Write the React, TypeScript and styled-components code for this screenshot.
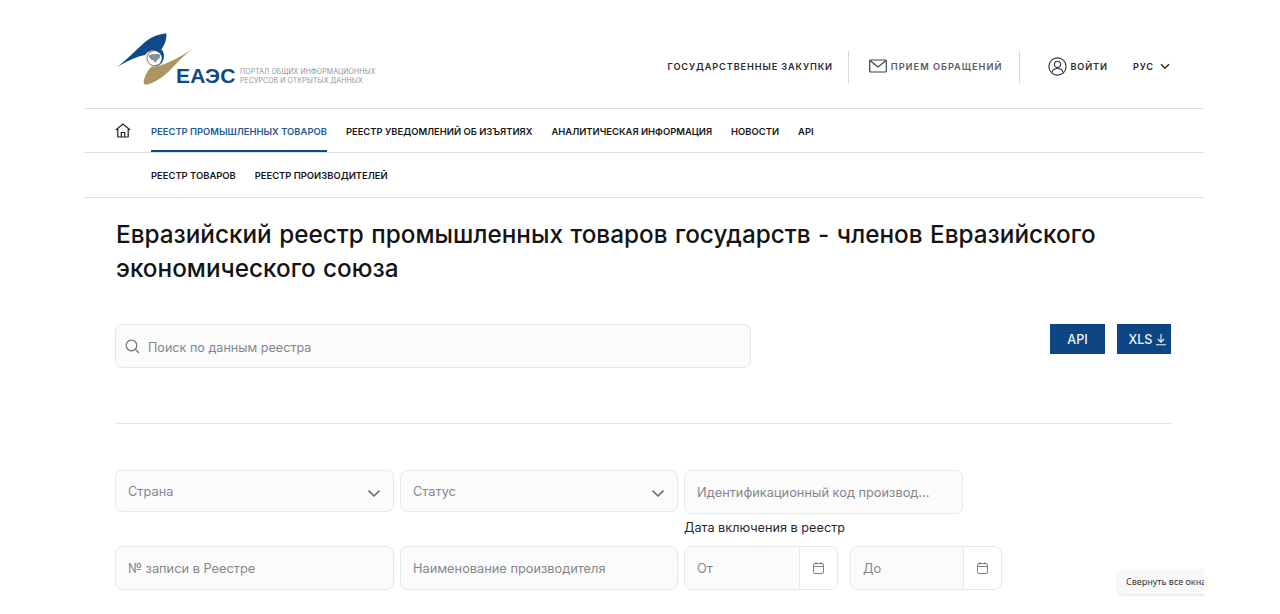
import React from "react";
import styled, { createGlobalStyle } from "styled-components";

const Global = createGlobalStyle`
  html, body { margin: 0; padding: 0; background: #fff; }
  body { font-family: Inter, "Noto Sans", "Liberation Sans", sans-serif; color: #111; overflow: hidden; }
`;

const Page = styled.div`
  position: relative;
  width: 1120px;
  height: 614px;
  margin-left: 84px;
  overflow: hidden;
  background: #fff;
`;

const Header = styled.header`
  height: 108px;
  border-bottom: 1px solid #dedede;
  display: flex;
  align-items: flex-start;
  justify-content: space-between;
  padding: 0 34px 0 31px;
`;

const Logo = styled.div`
  display: flex;
  align-items: flex-end;
  height: 85px;
  width: 270px;
`;

const LogoMark = styled.svg`
  width: 61px;
  height: 54px;
  overflow: visible;
  flex: none;
`;

const LogoName = styled.span`
  font-family: "Liberation Sans", Arial, sans-serif;
  font-weight: 700;
  font-size: 21px;
  line-height: 18px;
  letter-spacing: 0.2px;
  color: #10498a;
  flex: none;
  width: 64px;
`;

const LogoCaption = styled.span`
  font-size: 6.95px;
  line-height: 9px;
  letter-spacing: 0.1px;
  color: #8f959c;
  white-space: nowrap;
`;

const TopLinks = styled.nav`
  display: flex;
  align-items: center;
  height: 32px;
  margin-top: 51px;
`;

const TopLink = styled.span<{ $muted?: boolean }>`
  display: inline-flex;
  align-items: center;
  padding-bottom: 2px;
  font-size: 9.2px;
  font-weight: 600;
  letter-spacing: ${(p) => (p.$muted ? "1px" : "0.87px")};
  white-space: nowrap;
  color: ${(p) => (p.$muted ? "#555b60" : "#2a2a2a")};
`;

const Sep = styled.i<{ $ml: number; $mr: number }>`
  display: block;
  width: 1px;
  height: 32px;
  background: #d8d8d8;
  margin-left: ${(p) => p.$ml}px;
  margin-right: ${(p) => p.$mr}px;
`;

const IconGap = styled.span<{ $gap: number }>`
  display: inline-flex;
  margin-right: ${(p) => p.$gap}px;
`;

const Lang = styled(TopLink)`
  margin-left: 25px;
`;

const MainNav = styled.nav`
  height: 43px;
  border-bottom: 1px solid #dedede;
  display: flex;
  align-items: stretch;
  padding-left: 31px;
`;

const HomeIcon = styled.span`
  display: flex;
  align-items: center;
  width: 36px;
`;

const NavItems = styled.div`
  display: flex;
  gap: 19px;
  height: 100%;
`;

const NavItem = styled.a<{ $active?: boolean }>`
  display: flex;
  align-items: center;
  padding-top: 1px;
  box-sizing: border-box;
  font-size: 9.42px;
  font-weight: 600;
  white-space: nowrap;
  color: ${(p) => (p.$active ? "#1d5a96" : "#161616")};
  box-shadow: ${(p) => (p.$active ? "inset 0 -2px 0 #0f4a84" : "none")};
`;

const SubNav = styled.nav`
  height: 44px;
  border-bottom: 1px solid #dedede;
`;

const SubItems = styled(NavItems)`
  padding-left: 67px;
`;

const Content = styled.main`
  padding: 19px 33px 0 32px;
`;

const Title = styled.h1`
  margin: 0;
  font-size: 24.3px;
  word-spacing: 1px;
  line-height: 34px;
  font-weight: 500;
  color: #141414;
  width: 1010px;
`;

const SearchRow = styled.div`
  display: flex;
  justify-content: space-between;
  align-items: flex-start;
  margin-top: 39px;
  margin-left: -1px;
`;

const SearchBox = styled.div`
  width: 636px;
  height: 44px;
  box-sizing: border-box;
  border: 1px solid #e6e6e6;
  border-radius: 7px;
  background: #fbfbfb;
  display: flex;
  align-items: center;
  padding-left: 9px;
  gap: 8px;
`;

const Placeholder = styled.span`
  font-size: 12.8px;
  color: #83878b;
  white-space: nowrap;
`;

const SearchText = styled(Placeholder)`
  font-size: 12.6px;
  padding-top: 2px;
`;

const Actions = styled.div`
  display: flex;
  gap: 12px;
`;

const ActionButton = styled.button<{ $w: number; $pl?: number }>`
  height: 30px;
  width: ${(p) => p.$w}px;
  border: 0;
  padding: 0 0 0 ${(p) => p.$pl ?? 0}px;
  background: #0d4683;
  color: #eef3f8;
  font: 500 12.5px Inter, sans-serif;
  display: flex;
  align-items: center;
  justify-content: center;
  gap: 3px;
`;

const Divider = styled.hr`
  border: 0;
  border-top: 1px solid #e2e2e2;
  margin: 55px 0 0 -1px;
`;

const Filters = styled.div`
  margin-top: 46px;
  margin-left: -1px;
  display: grid;
  grid-template-columns: 279px 278px 318px;
  column-gap: 6px;
`;

const Field = styled.div<{ $h?: number }>`
  height: ${(p) => p.$h ?? 44}px;
  box-sizing: border-box;
  border: 1px solid #e8e8e8;
  border-radius: 7px;
  background: #fbfbfb;
  display: flex;
  align-items: center;
  justify-content: space-between;
  padding: 0 12px 0 12px;
  overflow: hidden;
`;

const FirstRow = styled.div`
  grid-column: 1 / -1;
  display: grid;
  grid-template-columns: 279px 278px 279px;
  column-gap: 6px;
`;

const Chevron = styled.span`
  display: flex;
  margin-top: 5px;
`;

const DateLabel = styled.div`
  grid-column: 3;
  font-size: 12.7px;
  line-height: 16px;
  color: #2a2a2a;
  margin-top: 6px;
  height: 26px;
  white-space: nowrap;
`;

const DateGroup = styled.div`
  display: flex;
  gap: 12px;
`;

const DateField = styled.div<{ $w: number }>`
  width: ${(p) => p.$w}px;
  height: 44px;
  box-sizing: border-box;
  border: 1px solid #e8e8e8;
  border-radius: 7px;
  display: flex;
  overflow: hidden;
  background: #fff;
`;

const DateInput = styled.div`
  flex: 1;
  background: #fbfbfb;
  border-right: 1px solid #e8e8e8;
  display: flex;
  align-items: center;
  padding-left: 12px;
`;

const DateIcon = styled.div`
  width: 37px;
  display: flex;
  align-items: center;
  justify-content: center;
  flex: none;
`;

const Tooltip = styled.div`
  position: absolute;
  left: 1034px;
  top: 570px;
  width: 110px;
  height: 24px;
  box-sizing: border-box;
  background: #f8f8f8;
  border-radius: 3px;
  box-shadow: 0 1px 3px rgba(0, 0, 0, 0.12);
  font-family: "Noto Sans", sans-serif;
  font-size: 9px;
  line-height: 24px;
  padding-left: 8px;
  white-space: nowrap;
  color: #333;
`;

const Calendar = () => (
  <svg width="13" height="14" viewBox="0 0 13 14" fill="none" stroke="#7d8186" strokeWidth="1">
    <rect x="1.5" y="2.5" width="10" height="10" rx="1.5" />
    <path d="M1.5 5.5h10M4 1v2.5M9 1v2.5" />
  </svg>
);

const Down = () => (
  <svg width="14" height="9" viewBox="0 0 14 9" fill="none" stroke="#5f656b" strokeWidth="1.5">
    <path d="M1.5 1.5 7 7l5.5-5.5" />
  </svg>
);

export default function App() {
  return (
    <Page>
      <Global />
      <Header>
        <Logo>
          <LogoMark viewBox="0 0 61 54">
            <circle cx="40" cy="27" r="8.6" fill="#ab9561" />
            <path d="M77 18.300C68 24 60 29 52 32C46 34.500 42 36 37 35.500C33.500 38 30 44 28.700 50C28.500 53.500 30 54.200 33 53.300C43 50.500 52 43 60 34C65 28.500 71 23 77 18.300Z" fill="#ab9561" />
            <path d="M2 36.300C10 30 22 18 30.300 10.700C37 5.500 44 3 51.300 2.300C52 7 50 14 46.300 18.300C50 22 50 29 45.500 32.500C43.500 34 41 35 39 35C44 32 46 28 44.500 23.500C43 20 39 18.500 35.500 19.800C32.500 21 30.800 22.800 30.300 24C24 24.800 12 30 2 36.300Z" fill="#10498a" />
            <circle cx="39.700" cy="27.200" r="7" fill="#fff" />
            <path d="M33.800 25c1.700-2.200 4-1.800 5.700-1.800 2.300 0 4.500-.8 5.500.8 1 2.400-1.600 4.300-3.200 5.200l-.8 2.400c-1.600 0-1.800-1.600-2.600-2.400-2.400 0-3.600-1.600-4.600-4.200Z" fill="#7f909d" />
          </LogoMark>
          <LogoName>ЕАЭС</LogoName>
          <LogoCaption>
            ПОРТАЛ ОБЩИХ ИНФОРМАЦИОННЫХ
            <br />
            РЕСУРСОВ И ОТКРЫТЫХ ДАННЫХ
          </LogoCaption>
        </Logo>
        <TopLinks>
          <TopLink>ГОСУДАРСТВЕННЫЕ ЗАКУПКИ</TopLink>
          <Sep $ml={15} $mr={20} />
          <TopLink $muted>
            <IconGap $gap={4}>
              <svg width="18" height="14" viewBox="0 0 18 14" fill="none" stroke="#3c4146" strokeWidth="1.2">
                <rect x=".7" y="1" width="16.600" height="12" rx="1" />
                <path d="m1 1.500 8 6.500 8-6.500" />
              </svg>
            </IconGap>
            ПРИЕМ ОБРАЩЕНИЙ
          </TopLink>
          <Sep $ml={17} $mr={28} />
          <TopLink>
            <IconGap $gap={3}>
              <svg width="19" height="19" viewBox="0 0 19 19" fill="none" stroke="#2f3337" strokeWidth="1.1">
                <circle cx="9.500" cy="9.500" r="8.600" />
                <circle cx="9.500" cy="7.300" r="3.100" />
                <path d="M4 15.500c.6-3 2.600-4 5.500-4s4.900 1 5.500 4" />
              </svg>
            </IconGap>
            ВОЙТИ
          </TopLink>
          <Lang>
            <IconGap $gap={6}>РУС</IconGap>
            <svg width="10" height="7" viewBox="0 0 10 7" fill="none" stroke="#2a2a2a" strokeWidth="1.4">
              <path d="M1 1.200 5 5.200l4-4" />
            </svg>
          </Lang>
        </TopLinks>
      </Header>
      <MainNav>
        <HomeIcon>
          <svg width="16" height="15" viewBox="0 0 16 15" fill="none" stroke="#222" strokeWidth="1.2">
            <path d="M.8 7 8 1l7.200 6M2.800 6v8h10.400V6M6.300 14V9.500h3.400V14" />
          </svg>
        </HomeIcon>
        <NavItems>
          <NavItem $active>РЕЕСТР ПРОМЫШЛЕННЫХ ТОВАРОВ</NavItem>
          <NavItem>РЕЕСТР УВЕДОМЛЕНИЙ ОБ ИЗЪЯТИЯХ</NavItem>
          <NavItem>АНАЛИТИЧЕСКАЯ ИНФОРМАЦИЯ</NavItem>
          <NavItem>НОВОСТИ</NavItem>
          <NavItem>API</NavItem>
        </NavItems>
      </MainNav>
      <SubNav>
        <SubItems>
          <NavItem>РЕЕСТР ТОВАРОВ</NavItem>
          <NavItem>РЕЕСТР ПРОИЗВОДИТЕЛЕЙ</NavItem>
        </SubItems>
      </SubNav>
      <Content>
        <Title>Евразийский реестр промышленных товаров государств - членов Евразийского экономического союза</Title>
        <SearchRow>
          <SearchBox>
            <svg width="15" height="15" viewBox="0 0 15 15" fill="none" stroke="#6f7479" strokeWidth="1.2">
              <circle cx="6.500" cy="6.500" r="5.300" />
              <path d="m10.500 10.500 3.500 3.500" />
            </svg>
            <SearchText>Поиск по данным реестра</SearchText>
          </SearchBox>
          <Actions>
            <ActionButton $w={55}>API</ActionButton>
            <ActionButton $w={54} $pl={8}>
              XLS
              <svg width="12" height="13" viewBox="0 0 12 13" fill="none" stroke="#eef3f8" strokeWidth="1.100">
                <path d="M6 1v8M2.800 6 6 9.200 9.200 6M1 11.700h10" />
              </svg>
            </ActionButton>
          </Actions>
        </SearchRow>
        <Divider />
        <Filters>
          <FirstRow>
            <Field $h={42}>
              <Placeholder>Страна</Placeholder>
              <Chevron><Down /></Chevron>
            </Field>
            <Field $h={42}>
              <Placeholder>Статус</Placeholder>
              <Chevron><Down /></Chevron>
            </Field>
            <Field $h={44}>
              <Placeholder>Идентификационный код производ...</Placeholder>
            </Field>
          </FirstRow>
          <DateLabel>Дата включения в реестр</DateLabel>
          <Field>
            <Placeholder>№ записи в Реестре</Placeholder>
          </Field>
          <Field>
            <Placeholder>Наименование производителя</Placeholder>
          </Field>
          <DateGroup>
            <DateField $w={154}>
              <DateInput><Placeholder>От</Placeholder></DateInput>
              <DateIcon><Calendar /></DateIcon>
            </DateField>
            <DateField $w={152}>
              <DateInput><Placeholder>До</Placeholder></DateInput>
              <DateIcon><Calendar /></DateIcon>
            </DateField>
          </DateGroup>
        </Filters>
      </Content>
      <Tooltip>Свернуть все окна</Tooltip>
    </Page>
  );
}
